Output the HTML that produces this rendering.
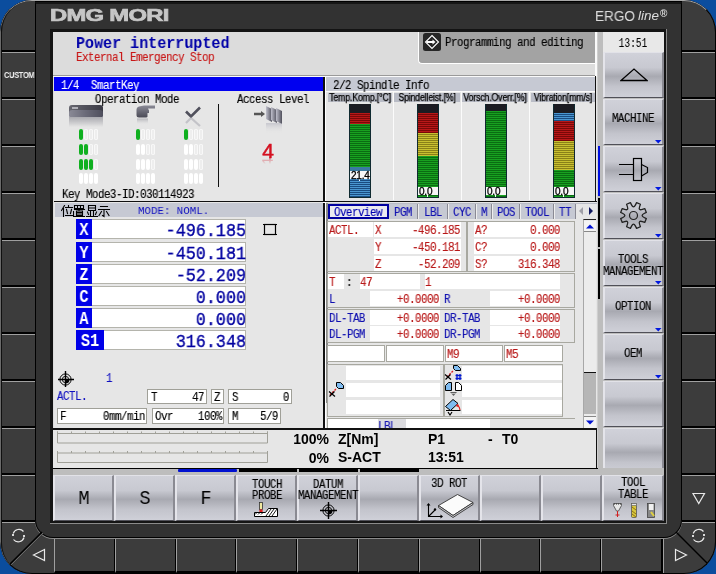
<!DOCTYPE html><html><head><meta charset="utf-8"><style>
*{margin:0;padding:0;box-sizing:border-box}
html,body{width:716px;height:574px;overflow:hidden;background:#0b4d9e}
body{font-family:"Liberation Sans",sans-serif;position:relative}
.a{position:absolute}
.mono{font-family:"Liberation Mono",monospace}
.fb{position:absolute;background:#3c3c3c;border-top:1px solid #a0a0a0;border-bottom:2px solid #000}
.bez{background:#323232}
.sk{position:absolute;background:linear-gradient(#d0d1d9 0%,#c8c9d1 33%,#a8a9b1 53%,#c3c4cc 76%,#cfd0d8 100%);border-left:2px solid #e4e4ea;border-right:2px solid #8a8a92;border-top:1px solid #e2e2e8;border-bottom:1px solid #505058}
</style></head><body>
<div class="a" style="left:0;top:0;width:716px;height:574px;clip-path:inset(0 round 32px);background:#000">
<div class="fb" style="left:2px;top:0px;width:33px;height:52px;border-top:none;"></div>
<div class="fb" style="left:682px;top:0px;width:33px;height:52px;border-top:none;"></div>
<div class="fb" style="left:2px;top:52px;width:33px;height:47px;"></div>
<div class="fb" style="left:682px;top:52px;width:33px;height:47px;"></div>
<div class="fb" style="left:2px;top:99px;width:33px;height:47px;"></div>
<div class="fb" style="left:682px;top:99px;width:33px;height:47px;"></div>
<div class="fb" style="left:2px;top:146px;width:33px;height:47px;"></div>
<div class="fb" style="left:682px;top:146px;width:33px;height:47px;"></div>
<div class="fb" style="left:2px;top:193px;width:33px;height:47px;"></div>
<div class="fb" style="left:682px;top:193px;width:33px;height:47px;"></div>
<div class="fb" style="left:2px;top:240px;width:33px;height:47px;"></div>
<div class="fb" style="left:682px;top:240px;width:33px;height:47px;"></div>
<div class="fb" style="left:2px;top:287px;width:33px;height:47px;"></div>
<div class="fb" style="left:682px;top:287px;width:33px;height:47px;"></div>
<div class="fb" style="left:2px;top:334px;width:33px;height:47px;"></div>
<div class="fb" style="left:682px;top:334px;width:33px;height:47px;"></div>
<div class="fb" style="left:2px;top:381px;width:33px;height:47px;"></div>
<div class="fb" style="left:682px;top:381px;width:33px;height:47px;"></div>
<div class="fb" style="left:2px;top:428px;width:33px;height:47px;"></div>
<div class="fb" style="left:682px;top:428px;width:33px;height:47px;"></div>
<div class="fb" style="left:2px;top:475px;width:33px;height:47px;"></div>
<div class="fb" style="left:682px;top:475px;width:33px;height:47px;"></div>
<div class="a" style="left:2px;top:522px;width:52px;height:52px;background:#3c3c3c;border-top:1px solid #a0a0a0"></div>
<div class="a" style="left:663px;top:522px;width:52px;height:52px;background:#3c3c3c;border-top:1px solid #a0a0a0;border-left:1px solid #a0a0a0"></div>
<div class="fb" style="left:54px;top:538px;width:61px;height:35px;border-left:1px solid #a0a0a0;border-right:1px solid #000"></div>
<div class="fb" style="left:115px;top:538px;width:61px;height:35px;border-left:1px solid #a0a0a0;border-right:1px solid #000"></div>
<div class="fb" style="left:176px;top:538px;width:60px;height:35px;border-left:1px solid #a0a0a0;border-right:1px solid #000"></div>
<div class="fb" style="left:236px;top:538px;width:61px;height:35px;border-left:1px solid #a0a0a0;border-right:1px solid #000"></div>
<div class="fb" style="left:297px;top:538px;width:61px;height:35px;border-left:1px solid #a0a0a0;border-right:1px solid #000"></div>
<div class="fb" style="left:358px;top:538px;width:61px;height:35px;border-left:1px solid #a0a0a0;border-right:1px solid #000"></div>
<div class="fb" style="left:419px;top:538px;width:61px;height:35px;border-left:1px solid #a0a0a0;border-right:1px solid #000"></div>
<div class="fb" style="left:480px;top:538px;width:60px;height:35px;border-left:1px solid #a0a0a0;border-right:1px solid #000"></div>
<div class="fb" style="left:540px;top:538px;width:61px;height:35px;border-left:1px solid #a0a0a0;border-right:1px solid #000"></div>
<div class="fb" style="left:601px;top:538px;width:61px;height:35px;border-left:1px solid #a0a0a0;border-right:1px solid #000"></div>
<div class="a bez" style="left:35px;top:2px;width:647px;height:536px;border-radius:0 0 18px 18px;border:1px solid #000;border-top:2px solid #161616;box-shadow:0 1px 0 #8a8a8a"></div>
<svg class="a" style="left:0;top:0" width="716" height="574">
<line x1="10" y1="564" x2="42" y2="532" stroke="#000" stroke-width="1.5"/><line x1="11" y1="565" x2="43" y2="533" stroke="#6a6a6a" stroke-width="1"/>
<line x1="676" y1="532" x2="707" y2="563" stroke="#000" stroke-width="1.5"/>
<path d="M13.2 533.5A6 6 0 0 1 23.5 531.5M24 537.5A6 6 0 0 1 13.5 539.5" fill="none" stroke="#e8e8e8" stroke-width="1.2"/><circle cx="13" cy="535" r="1.1" fill="#fff"/><circle cx="24" cy="536" r="1.1" fill="#fff"/>
<path d="M693.2 533.5A6 6 0 0 1 703.5 531.5M704 537.5A6 6 0 0 1 693.5 539.5" fill="none" stroke="#e8e8e8" stroke-width="1.2"/><circle cx="693" cy="536" r="1.1" fill="#fff"/><circle cx="704" cy="535" r="1.1" fill="#fff"/>
<path d="M44.5 549.5 L33.5 555 L44.5 560.5 Z" fill="none" stroke="#e8e8e8" stroke-width="1.2"/>
<path d="M675.5 549.5 L686.5 555 L675.5 560.5 Z" fill="none" stroke="#e8e8e8" stroke-width="1.2"/>
<path d="M693 493.5 L704.5 493.5 L698.75 503.5 Z" fill="none" stroke="#e8e8e8" stroke-width="1.2"/>
</svg>
<div class="a" style="left:0;top:0;width:716px;height:574px;border-radius:32px;border:1px solid #6a6a6a;border-top-color:#a8a8a8;border-right-color:#000;border-bottom-color:#000"></div>
<div class="a" style="left:1px;top:1px;width:714px;height:573px;border-radius:31px;border:1px solid #101010;border-top:none;border-right:none;border-bottom:none"></div>
<div class="a" style="left:1px;top:71px;width:33px;font:bold 9px 'Liberation Sans';line-height:9px;color:#f0f0f0;text-align:center;transform:scaleX(0.82);letter-spacing:-0.3px;will-change:transform">CUSTOM</div>
</div>
<div class="a" style="left:50px;top:7px;font:bold 17px 'Liberation Sans';line-height:17px;color:#c6c6c6;transform:scaleX(1.4);transform-origin:left top;white-space:nowrap;-webkit-text-stroke:0.7px #c6c6c6;letter-spacing:-0.5px;will-change:transform">DMG MORI</div>
<div class="a" style="left:595px;top:9px;font:14px 'Liberation Sans';line-height:14px;color:#dcdcdc;white-space:nowrap;will-change:transform;transform:scaleX(0.97);transform-origin:0 0">ERGO</div>
<div class="a" style="left:638px;top:9px;font:italic 13.5px 'Liberation Sans';line-height:14px;color:#dcdcdc;white-space:nowrap;will-change:transform">line</div>
<div class="a" style="left:660px;top:9px;font:bold 10px 'Liberation Sans';line-height:10px;color:#dcdcdc;white-space:nowrap;will-change:transform">®</div>
<div class="a" style="left:50px;top:29px;width:617px;height:495px;background:#141414;border-right:1px solid #8a8a8a;border-bottom:1px solid #8a8a8a"></div>
<div class="a" style="left:53px;top:32px;width:545px;height:435px;background:#dcdcdc;border-left:1px solid #fff;border-top:1px solid #fff;border-radius:3px 0 0 0"></div>
<div class="a" style="left:597px;top:32px;width:67px;height:443px;background:#bdbdbd"></div>
<div class="a" style="left:596px;top:32px;width:2px;height:436px;background:#cfcfcf"></div>
<div class="a" style="left:598px;top:146px;width:2px;height:50px;background:#0010e0"></div>
<div class="a" style="left:598px;top:198px;width:2px;height:49px;background:#000"></div>
<div class="a" style="left:598px;top:249px;width:2px;height:50px;background:#000"></div>
<div class="a" style="left:603px;top:32px;width:61px;height:20px;background:#e8e8e8"></div>
<div class="a" style="left:433px;top:38px;width:400px;text-align:center;font:12px 'Liberation Mono';line-height:12px;color:#000;white-space:pre;will-change:transform;transform:scaleX(0.8);transform-origin:50% 0;">13:51</div>
<div class="sk" style="left:603px;top:52px;width:61px;height:46px"></div>
<div class="sk" style="left:603px;top:99px;width:61px;height:46px"></div>
<div class="sk" style="left:603px;top:146px;width:61px;height:46px"></div>
<div class="sk" style="left:603px;top:193px;width:61px;height:46px"></div>
<div class="sk" style="left:603px;top:240px;width:61px;height:46px"></div>
<div class="sk" style="left:603px;top:287px;width:61px;height:46px"></div>
<div class="sk" style="left:603px;top:334px;width:61px;height:46px"></div>
<div class="sk" style="left:603px;top:381px;width:61px;height:46px"></div>
<div class="sk" style="left:603px;top:428px;width:61px;height:46px"></div>
<svg class="a" style="left:655px;top:140px" width="7" height="4"><path d="M0 0H6.5L3.25 3.5Z" fill="#0018e0"/></svg>
<svg class="a" style="left:655px;top:187px" width="7" height="4"><path d="M0 0H6.5L3.25 3.5Z" fill="#0018e0"/></svg>
<svg class="a" style="left:655px;top:234px" width="7" height="4"><path d="M0 0H6.5L3.25 3.5Z" fill="#0018e0"/></svg>
<svg class="a" style="left:655px;top:281px" width="7" height="4"><path d="M0 0H6.5L3.25 3.5Z" fill="#0018e0"/></svg>
<svg class="a" style="left:655px;top:328px" width="7" height="4"><path d="M0 0H6.5L3.25 3.5Z" fill="#0018e0"/></svg>
<svg class="a" style="left:655px;top:375px" width="7" height="4"><path d="M0 0H6.5L3.25 3.5Z" fill="#0018e0"/></svg>
<svg class="a" style="left:620px;top:66px" width="28" height="16"><path d="M1 14.5H27L14 3Z" fill="none" stroke="#000" stroke-width="1.3"/></svg>
<div class="a" style="left:433px;top:113px;width:400px;text-align:center;font:12px 'Liberation Mono';line-height:12px;color:#000;white-space:pre;will-change:transform;transform:scaleX(0.9);transform-origin:50% 0;letter-spacing:-0.53px;-webkit-text-stroke:0.15px currentColor">MACHINE</div>
<div class="a" style="left:433px;top:254px;width:400px;text-align:center;font:12px 'Liberation Mono';line-height:12px;color:#000;white-space:pre;will-change:transform;transform:scaleX(0.9);transform-origin:50% 0;letter-spacing:-0.53px;-webkit-text-stroke:0.15px currentColor">TOOLS</div>
<div class="a" style="left:433px;top:266px;width:400px;text-align:center;font:12px 'Liberation Mono';line-height:12px;color:#000;white-space:pre;will-change:transform;transform:scaleX(0.9);transform-origin:50% 0;letter-spacing:-0.53px;-webkit-text-stroke:0.15px currentColor">MANAGEMENT</div>
<div class="a" style="left:433px;top:301px;width:400px;text-align:center;font:12px 'Liberation Mono';line-height:12px;color:#000;white-space:pre;will-change:transform;transform:scaleX(0.9);transform-origin:50% 0;letter-spacing:-0.53px;-webkit-text-stroke:0.15px currentColor">OPTION</div>
<div class="a" style="left:433px;top:348px;width:400px;text-align:center;font:12px 'Liberation Mono';line-height:12px;color:#000;white-space:pre;will-change:transform;transform:scaleX(0.9);transform-origin:50% 0;letter-spacing:-0.53px;-webkit-text-stroke:0.15px currentColor">OEM</div>
<svg class="a" style="left:615px;top:155px" width="40" height="30"><path d="M4 9.5H18.5M4 19.5H18.5" stroke="#000" stroke-width="1.2"/><rect x="18.5" y="3.5" width="8" height="22" fill="none" stroke="#000" stroke-width="1.2"/><path d="M26.5 9.5L32.5 12.5V17.5L26.5 21" fill="none" stroke="#000" stroke-width="1.2"/></svg>
<svg class="a" style="left:613px;top:195px" width="42" height="42"><path d="M22.47 9.88L23.58 7.66L27.40 9.25L26.62 11.60Q25.17 15.83 29.40 14.38L31.75 13.60L33.34 17.42L31.12 18.53Q27.10 20.50 31.12 22.47L33.34 23.58L31.75 27.40L29.40 26.62Q25.17 25.17 26.62 29.40L27.40 31.75L23.58 33.34L22.47 31.12Q20.50 27.10 18.53 31.12L17.42 33.34L13.60 31.75L14.38 29.40Q15.83 25.17 11.60 26.62L9.25 27.40L7.66 23.58L9.88 22.47Q13.90 20.50 9.88 18.53L7.66 17.42L9.25 13.60L11.60 14.38Q15.83 15.83 14.38 11.60L13.60 9.25L17.42 7.66L18.53 9.88Q20.50 13.90 22.47 9.88Z" fill="none" stroke="#222" stroke-width="1.3" stroke-linejoin="round"/><circle cx="20.5" cy="20.5" r="4" fill="none" stroke="#222" stroke-width="1.2"/></svg>
<div class="a" style="left:53px;top:468px;width:545px;height:1px;background:#000"></div>
<div class="a" style="left:598px;top:468px;width:66px;height:2px;background:#bdbdbd"></div>
<div class="a" style="left:53px;top:469px;width:611px;height:6px;background:#bdbdbd"></div>
<div class="a" style="left:178px;top:469px;width:59px;height:3px;background:#0010d0;border-radius:1px"></div>
<div class="a" style="left:239px;top:469px;width:58px;height:3px;background:#000"></div>
<div class="a" style="left:299px;top:469px;width:59px;height:3px;background:#000"></div>
<div class="a" style="left:360px;top:469px;width:59px;height:3px;background:#000"></div>
<div class="sk" style="left:53px;top:475px;width:61px;height:46px"></div>
<div class="sk" style="left:114px;top:475px;width:61px;height:46px"></div>
<div class="sk" style="left:175px;top:475px;width:61px;height:46px"></div>
<div class="sk" style="left:236px;top:475px;width:61px;height:46px"></div>
<div class="sk" style="left:297px;top:475px;width:61px;height:46px"></div>
<div class="sk" style="left:358px;top:475px;width:61px;height:46px"></div>
<div class="sk" style="left:419px;top:475px;width:61px;height:46px"></div>
<div class="sk" style="left:480px;top:475px;width:61px;height:46px"></div>
<div class="sk" style="left:541px;top:475px;width:61px;height:46px"></div>
<div class="sk" style="left:602px;top:475px;width:62px;height:46px"></div>
<div class="a" style="left:53px;top:521px;width:611px;height:2px;background:#141414"></div>
<div class="a" style="left:-116.5px;top:489px;width:400px;text-align:center;font:20px 'Liberation Mono';line-height:20px;color:#000;white-space:pre;will-change:transform;transform:scaleX(0.92);transform-origin:50% 0;">M</div>
<div class="a" style="left:-55.5px;top:489px;width:400px;text-align:center;font:20px 'Liberation Mono';line-height:20px;color:#000;white-space:pre;will-change:transform;transform:scaleX(0.92);transform-origin:50% 0;">S</div>
<div class="a" style="left:5.5px;top:489px;width:400px;text-align:center;font:20px 'Liberation Mono';line-height:20px;color:#000;white-space:pre;will-change:transform;transform:scaleX(0.92);transform-origin:50% 0;">F</div>
<div class="a" style="left:67px;top:479px;width:400px;text-align:center;font:12px 'Liberation Mono';line-height:12px;color:#000;white-space:pre;will-change:transform;transform:scaleX(0.9);transform-origin:50% 0;letter-spacing:-0.53px;-webkit-text-stroke:0.15px currentColor">TOUCH</div>
<div class="a" style="left:67px;top:490px;width:400px;text-align:center;font:12px 'Liberation Mono';line-height:12px;color:#000;white-space:pre;will-change:transform;transform:scaleX(0.9);transform-origin:50% 0;letter-spacing:-0.53px;-webkit-text-stroke:0.15px currentColor">PROBE</div>
<div class="a" style="left:128px;top:479px;width:400px;text-align:center;font:12px 'Liberation Mono';line-height:12px;color:#000;white-space:pre;will-change:transform;transform:scaleX(0.9);transform-origin:50% 0;letter-spacing:-0.53px;-webkit-text-stroke:0.15px currentColor">DATUM</div>
<div class="a" style="left:128px;top:490px;width:400px;text-align:center;font:12px 'Liberation Mono';line-height:12px;color:#000;white-space:pre;will-change:transform;transform:scaleX(0.9);transform-origin:50% 0;letter-spacing:-0.53px;-webkit-text-stroke:0.15px currentColor">MANAGEMENT</div>
<div class="a" style="left:249px;top:478px;width:400px;text-align:center;font:12px 'Liberation Mono';line-height:12px;color:#000;white-space:pre;will-change:transform;transform:scaleX(0.9);transform-origin:50% 0;letter-spacing:-0.53px;-webkit-text-stroke:0.15px currentColor">3D ROT</div>
<div class="a" style="left:433px;top:477px;width:400px;text-align:center;font:12px 'Liberation Mono';line-height:12px;color:#000;white-space:pre;will-change:transform;transform:scaleX(0.9);transform-origin:50% 0;letter-spacing:-0.53px;-webkit-text-stroke:0.15px currentColor">TOOL</div>
<div class="a" style="left:433px;top:489px;width:400px;text-align:center;font:12px 'Liberation Mono';line-height:12px;color:#000;white-space:pre;will-change:transform;transform:scaleX(0.9);transform-origin:50% 0;letter-spacing:-0.53px;-webkit-text-stroke:0.15px currentColor">TABLE</div>
<div class="a" style="left:53px;top:32px;width:544px;height:436px;background:#dcdcdc"></div>
<div class="a" style="left:418px;top:32px;width:179px;height:32px;background:#a3a3a3;border-left:1px solid #fff;border-bottom:1px solid #fff;border-radius:0 0 0 4px"></div>
<svg class="a" style="left:423px;top:33px" width="19" height="19"><rect x="0" y="0" width="18" height="18" rx="2.5" fill="#262626"/><path d="M9 2.5L15.5 9L9 15.5L2.5 9Z" fill="none" stroke="#fff" stroke-width="1.1"/><path d="M3.5 9H11" stroke="#fff" stroke-width="2"/><path d="M9.5 6.5L12.5 9L9.5 11.5Z" fill="#fff"/></svg>
<div class="a" style="left:445px;top:37px;font:12px 'Liberation Mono';line-height:12px;color:#000;white-space:pre;will-change:transform;transform:scaleX(0.9);transform-origin:0 0;letter-spacing:-0.53px;-webkit-text-stroke:0.15px currentColor">Programming and editing</div>
<div class="a" style="left:76px;top:36px;font:bold 16px 'Liberation Mono';line-height:16px;color:#0000a8;white-space:pre;will-change:transform;transform:scaleX(0.94);transform-origin:0 0;">Power interrupted</div>
<div class="a" style="left:76px;top:52px;font:12px 'Liberation Mono';line-height:12px;color:#c81818;white-space:pre;will-change:transform;transform:scaleX(0.9);transform-origin:0 0;letter-spacing:-0.53px;-webkit-text-stroke:0.15px currentColor">External Emergency Stop</div>
<div class="a" style="left:53px;top:75px;width:544px;height:1px;background:#9a9a9a"></div>
<div class="a" style="left:595px;top:32px;width:2px;height:44px;background:#fafafa"></div>
<div class="a" style="left:53px;top:76px;width:544px;height:1px;background:#fafafa"></div>
<div class="a" style="left:54px;top:77px;width:269px;height:124px;background:#e6e6e6"></div>
<div class="a" style="left:54px;top:77px;width:269px;height:14px;background:#0000f0"></div>
<div class="a" style="left:61px;top:80px;font:12px 'Liberation Mono';line-height:12px;color:#fff;white-space:pre;will-change:transform;transform:scaleX(0.9);transform-origin:0 0;letter-spacing:-0.53px;-webkit-text-stroke:0.15px currentColor">1/4  SmartKey</div>
<div class="a" style="left:-63px;top:94px;width:400px;text-align:center;font:12px 'Liberation Mono';line-height:12px;color:#000;white-space:pre;will-change:transform;transform:scaleX(0.9);transform-origin:50% 0;letter-spacing:-0.53px;-webkit-text-stroke:0.15px currentColor">Operation Mode</div>
<div class="a" style="left:73px;top:94px;width:400px;text-align:center;font:12px 'Liberation Mono';line-height:12px;color:#000;white-space:pre;will-change:transform;transform:scaleX(0.9);transform-origin:50% 0;letter-spacing:-0.53px;-webkit-text-stroke:0.15px currentColor">Access Level</div>
<div class="a" style="left:218px;top:104px;width:1px;height:83px;background:#111"></div>
<div class="a" style="left:62px;top:189px;font:12px 'Liberation Mono';line-height:12px;color:#000;white-space:pre;will-change:transform;transform:scaleX(0.9);transform-origin:0 0;letter-spacing:-0.53px;-webkit-text-stroke:0.15px currentColor">Key Mode3-ID:030114923</div>
<div class="a" style="left:69px;top:105px;width:34px;height:12px;border-radius:3px 3px 1px 1px;background:linear-gradient(90deg,#8a8a96,#6a6a78 50%,#4e4e5c);box-shadow:inset 0 5px 0 rgba(0,0,0,.25)"></div>
<div class="a" style="left:69px;top:117px;width:34px;height:10px;background:linear-gradient(rgba(120,120,130,.55),rgba(200,200,205,0))"></div>
<div class="a" style="left:72px;top:107px;width:6px;height:2px;background:#b0b0b8"></div>
<svg class="a" style="left:134px;top:104px" width="24" height="24"><defs><linearGradient id="hg" x1="0" y1="0" x2="0" y2="1"><stop offset="0" stop-color="#8a8a96"/><stop offset="1" stop-color="#4a4a56"/></linearGradient><linearGradient id="hr" x1="0" y1="0" x2="0" y2="1"><stop offset="0" stop-color="#8a8a94" stop-opacity=".55"/><stop offset="1" stop-color="#e6e6e6" stop-opacity="0"/></linearGradient></defs><path d="M2.5 6Q2.5 3 5 2.5L10 1.5H21V4.5H14L15 6.5V9H13.5V12.5Q13.5 13.5 12 13.5H5Q2.5 13.5 2.5 11Z" fill="url(#hg)"/><path d="M3 14.5H14V21H3Z" fill="url(#hr)"/></svg>
<svg class="a" style="left:184px;top:105px" width="18" height="24"><path d="M2 6.5L7 11.5L16 2.5" fill="none" stroke="#50505c" stroke-width="2.6"/><path d="M2 18L7 13L16 21" fill="none" stroke="#9a9aa4" stroke-width="2.2" opacity=".45"/></svg>
<div class="a" style="left:79px;top:129px;width:3.5px;height:11px;border-radius:2px;background:#10b020"></div>
<div class="a" style="left:84px;top:129px;width:3.5px;height:11px;border-radius:2px;background:#eeeeee;box-shadow:inset 0 0 0 0.8px #fafafa"></div>
<div class="a" style="left:89px;top:129px;width:3.5px;height:11px;border-radius:2px;background:#eeeeee;box-shadow:inset 0 0 0 0.8px #fafafa"></div>
<div class="a" style="left:94px;top:129px;width:3.5px;height:11px;border-radius:2px;background:#eeeeee;box-shadow:inset 0 0 0 0.8px #fafafa"></div>
<div class="a" style="left:79px;top:144px;width:3.5px;height:11px;border-radius:2px;background:#10b020"></div>
<div class="a" style="left:84px;top:144px;width:3.5px;height:11px;border-radius:2px;background:#10b020"></div>
<div class="a" style="left:89px;top:144px;width:3.5px;height:11px;border-radius:2px;background:#eeeeee;box-shadow:inset 0 0 0 0.8px #fafafa"></div>
<div class="a" style="left:94px;top:144px;width:3.5px;height:11px;border-radius:2px;background:#eeeeee;box-shadow:inset 0 0 0 0.8px #fafafa"></div>
<div class="a" style="left:79px;top:159px;width:3.5px;height:11px;border-radius:2px;background:#10b020"></div>
<div class="a" style="left:84px;top:159px;width:3.5px;height:11px;border-radius:2px;background:#10b020"></div>
<div class="a" style="left:89px;top:159px;width:3.5px;height:11px;border-radius:2px;background:#10b020"></div>
<div class="a" style="left:94px;top:159px;width:3.5px;height:11px;border-radius:2px;background:#eeeeee;box-shadow:inset 0 0 0 0.8px #fafafa"></div>
<div class="a" style="left:79px;top:173px;width:3.5px;height:11px;border-radius:2px;background:#fff"></div>
<div class="a" style="left:84px;top:173px;width:3.5px;height:11px;border-radius:2px;background:#fff"></div>
<div class="a" style="left:89px;top:173px;width:3.5px;height:11px;border-radius:2px;background:#fff"></div>
<div class="a" style="left:94px;top:173px;width:3.5px;height:11px;border-radius:2px;background:#fff"></div>
<div class="a" style="left:136px;top:129px;width:3.5px;height:11px;border-radius:2px;background:#10b020"></div>
<div class="a" style="left:141px;top:129px;width:3.5px;height:11px;border-radius:2px;background:#eeeeee;box-shadow:inset 0 0 0 0.8px #fafafa"></div>
<div class="a" style="left:146px;top:129px;width:3.5px;height:11px;border-radius:2px;background:#eeeeee;box-shadow:inset 0 0 0 0.8px #fafafa"></div>
<div class="a" style="left:151px;top:129px;width:3.5px;height:11px;border-radius:2px;background:#eeeeee;box-shadow:inset 0 0 0 0.8px #fafafa"></div>
<div class="a" style="left:136px;top:144px;width:3.5px;height:11px;border-radius:2px;background:#fff"></div>
<div class="a" style="left:141px;top:144px;width:3.5px;height:11px;border-radius:2px;background:#fff"></div>
<div class="a" style="left:146px;top:144px;width:3.5px;height:11px;border-radius:2px;background:#eeeeee;box-shadow:inset 0 0 0 0.8px #fafafa"></div>
<div class="a" style="left:151px;top:144px;width:3.5px;height:11px;border-radius:2px;background:#eeeeee;box-shadow:inset 0 0 0 0.8px #fafafa"></div>
<div class="a" style="left:136px;top:159px;width:3.5px;height:11px;border-radius:2px;background:#fff"></div>
<div class="a" style="left:141px;top:159px;width:3.5px;height:11px;border-radius:2px;background:#fff"></div>
<div class="a" style="left:146px;top:159px;width:3.5px;height:11px;border-radius:2px;background:#fff"></div>
<div class="a" style="left:151px;top:159px;width:3.5px;height:11px;border-radius:2px;background:#eeeeee;box-shadow:inset 0 0 0 0.8px #fafafa"></div>
<div class="a" style="left:136px;top:173px;width:3.5px;height:11px;border-radius:2px;background:#fff"></div>
<div class="a" style="left:141px;top:173px;width:3.5px;height:11px;border-radius:2px;background:#fff"></div>
<div class="a" style="left:146px;top:173px;width:3.5px;height:11px;border-radius:2px;background:#fff"></div>
<div class="a" style="left:151px;top:173px;width:3.5px;height:11px;border-radius:2px;background:#fff"></div>
<div class="a" style="left:184px;top:129px;width:3.5px;height:11px;border-radius:2px;background:#10b020"></div>
<div class="a" style="left:189px;top:129px;width:3.5px;height:11px;border-radius:2px;background:#eeeeee;box-shadow:inset 0 0 0 0.8px #fafafa"></div>
<div class="a" style="left:194px;top:129px;width:3.5px;height:11px;border-radius:2px;background:#eeeeee;box-shadow:inset 0 0 0 0.8px #fafafa"></div>
<div class="a" style="left:199px;top:129px;width:3.5px;height:11px;border-radius:2px;background:#eeeeee;box-shadow:inset 0 0 0 0.8px #fafafa"></div>
<div class="a" style="left:184px;top:144px;width:3.5px;height:11px;border-radius:2px;background:#fff"></div>
<div class="a" style="left:189px;top:144px;width:3.5px;height:11px;border-radius:2px;background:#fff"></div>
<div class="a" style="left:194px;top:144px;width:3.5px;height:11px;border-radius:2px;background:#eeeeee;box-shadow:inset 0 0 0 0.8px #fafafa"></div>
<div class="a" style="left:199px;top:144px;width:3.5px;height:11px;border-radius:2px;background:#eeeeee;box-shadow:inset 0 0 0 0.8px #fafafa"></div>
<div class="a" style="left:184px;top:159px;width:3.5px;height:11px;border-radius:2px;background:#fff"></div>
<div class="a" style="left:189px;top:159px;width:3.5px;height:11px;border-radius:2px;background:#fff"></div>
<div class="a" style="left:194px;top:159px;width:3.5px;height:11px;border-radius:2px;background:#fff"></div>
<div class="a" style="left:199px;top:159px;width:3.5px;height:11px;border-radius:2px;background:#eeeeee;box-shadow:inset 0 0 0 0.8px #fafafa"></div>
<div class="a" style="left:184px;top:173px;width:3.5px;height:11px;border-radius:2px;background:#fff"></div>
<div class="a" style="left:189px;top:173px;width:3.5px;height:11px;border-radius:2px;background:#fff"></div>
<div class="a" style="left:194px;top:173px;width:3.5px;height:11px;border-radius:2px;background:#fff"></div>
<div class="a" style="left:199px;top:173px;width:3.5px;height:11px;border-radius:2px;background:#fff"></div>
<svg class="a" style="left:252px;top:104px" width="34" height="30"><defs><linearGradient id="sg" x1="0" x2="1"><stop offset="0" stop-color="#c0c0cc"/><stop offset="1" stop-color="#50505c"/></linearGradient></defs><path d="M2 10H10" stroke="#555" stroke-width="2.5"/><path d="M9 7L13 10L9 13Z" fill="#555"/><path d="M14 2L20 5L20 18L14 15Z" fill="url(#sg)"/><path d="M19 3L25 6L25 19L19 16Z" fill="url(#sg)"/><path d="M24 4L30 7L30 20L24 17Z" fill="url(#sg)"/><defs><linearGradient id="rg2" x1="0" y1="0" x2="0" y2="1"><stop offset="0" stop-color="#a0a0b0" stop-opacity=".45"/><stop offset="1" stop-color="#e6e6e6" stop-opacity="0"/></linearGradient></defs><rect x="14" y="19" width="16" height="10" fill="url(#rg2)"/></svg>
<div class="a" style="left:67.5px;top:140px;width:400px;text-align:center;font:21px 'Liberation Sans';line-height:21px;color:#d41020;white-space:pre;will-change:transform;transform:scaleX(1.0);transform-origin:50% 0;-webkit-text-stroke:0.5px #d41020">4</div>
<div class="a" style="left:257px;top:154px;width:21px;height:21px;font:21px 'Liberation Sans';line-height:21px;color:#d41020;text-align:center;transform:scaleY(-1);opacity:.45;-webkit-mask-image:linear-gradient(to top,#000 0,#000 4px,transparent 10px);will-change:transform">4</div>
<div class="a" style="left:323px;top:77px;width:2px;height:351px;background:#111"></div>
<div class="a" style="left:325px;top:77px;width:1px;height:351px;background:#fff"></div>
<div class="a" style="left:54px;top:201px;width:543px;height:1px;background:#111"></div>
<div class="a" style="left:54px;top:202px;width:543px;height:1px;background:#fff"></div>
<div class="a" style="left:326px;top:77px;width:271px;height:124px;background:#e6e6e6"></div>
<div class="a" style="left:326px;top:77px;width:270px;height:14px;background:#c6c9d3"></div>
<div class="a" style="left:326px;top:91px;width:270px;height:1px;background:#fafafa"></div>
<div class="a" style="left:333px;top:80px;font:12px 'Liberation Mono';line-height:12px;color:#000;white-space:pre;will-change:transform;transform:scaleX(0.9);transform-origin:0 0;letter-spacing:-0.53px;-webkit-text-stroke:0.15px currentColor">2/2 Spindle Info</div>
<div class="a" style="left:328px;top:93px;width:64px;height:9px;background:#b9bcc6"></div>
<div class="a" style="left:159.5px;top:93px;width:400px;text-align:center;font:10px 'Liberation Sans';line-height:10px;color:#000;white-space:pre;will-change:transform;transform:scaleX(0.88);transform-origin:50% 0;letter-spacing:-0.2px;-webkit-text-stroke:0.25px #000">Temp.Komp.[°C]</div>
<div class="a" style="left:394px;top:93px;width:66px;height:9px;background:#b9bcc6"></div>
<div class="a" style="left:227.0px;top:93px;width:400px;text-align:center;font:10px 'Liberation Sans';line-height:10px;color:#000;white-space:pre;will-change:transform;transform:scaleX(0.88);transform-origin:50% 0;letter-spacing:-0.2px;-webkit-text-stroke:0.25px #000">Spindelleist.[%]</div>
<div class="a" style="left:462px;top:93px;width:66px;height:9px;background:#b9bcc6"></div>
<div class="a" style="left:295.0px;top:93px;width:400px;text-align:center;font:10px 'Liberation Sans';line-height:10px;color:#000;white-space:pre;will-change:transform;transform:scaleX(0.88);transform-origin:50% 0;letter-spacing:-0.2px;-webkit-text-stroke:0.25px #000">Vorsch.Overr.[%]</div>
<div class="a" style="left:531px;top:93px;width:64px;height:9px;background:#b9bcc6"></div>
<div class="a" style="left:363.0px;top:93px;width:400px;text-align:center;font:10px 'Liberation Sans';line-height:10px;color:#000;white-space:pre;will-change:transform;transform:scaleX(0.88);transform-origin:50% 0;letter-spacing:-0.2px;-webkit-text-stroke:0.25px #000">Vibration[mm/s]</div>
<div class="a" style="left:595px;top:76px;width:1px;height:125px;background:#111"></div>
<div class="a" style="left:393px;top:92px;width:1px;height:108px;background:#fbfbfb"></div>
<div class="a" style="left:461px;top:92px;width:1px;height:108px;background:#fbfbfb"></div>
<div class="a" style="left:529px;top:92px;width:1px;height:108px;background:#fbfbfb"></div>
<div class="a" style="left:349px;top:104px;width:22px;height:94px;background:#102a30"></div>
<div class="a" style="left:350px;top:104px;width:20px;height:9px;background:#1c1c22"></div>
<div class="a" style="left:350px;top:113px;width:20px;height:11px;background:repeating-linear-gradient(#b81818 0 1.3px,#780808 1.3px 2px)"></div><div class="a" style="left:350px;top:124px;width:20px;height:43px;background:repeating-linear-gradient(#18a020 0 1.3px,#0a6c12 1.3px 2px)"></div><div class="a" style="left:350px;top:167px;width:20px;height:4px;background:repeating-linear-gradient(#3a7aa0 0 1.3px,#3a7aa0 1.3px 2px)"></div><div class="a" style="left:350px;top:179px;width:20px;height:18px;background:repeating-linear-gradient(#4a96d0 0 1.3px,#1a4c80 1.3px 2px)"></div>
<div class="a" style="left:350px;top:171px;width:20px;height:8px;background:#f6f6f6"></div>
<div class="a" style="left:359px;top:179px;width:1px;height:2px;background:#f6f6f6"></div>
<div class="a" style="left:351px;top:171px;font:10px 'Liberation Sans';line-height:10px;color:#000;white-space:pre;will-change:transform;transform:scaleX(1.0);transform-origin:0 0;letter-spacing:-0.2px;line-height:9px;-webkit-text-stroke:0.3px #000">21.4</div>
<div class="a" style="left:417px;top:104px;width:22px;height:94px;background:#102a30"></div>
<div class="a" style="left:418px;top:104px;width:20px;height:9px;background:#1c1c22"></div>
<div class="a" style="left:418px;top:113px;width:20px;height:20px;background:repeating-linear-gradient(#b81818 0 1.3px,#780808 1.3px 2px)"></div><div class="a" style="left:418px;top:133px;width:20px;height:23px;background:repeating-linear-gradient(#c8c030 0 1.3px,#8a8018 1.3px 2px)"></div><div class="a" style="left:418px;top:156px;width:20px;height:41px;background:repeating-linear-gradient(#18a020 0 1.3px,#0a6c12 1.3px 2px)"></div>
<div class="a" style="left:418px;top:187px;width:20px;height:8px;background:#f6f6f6"></div>
<div class="a" style="left:427px;top:195px;width:1px;height:2px;background:#f6f6f6"></div>
<div class="a" style="left:419px;top:187px;font:10px 'Liberation Sans';line-height:10px;color:#000;white-space:pre;will-change:transform;transform:scaleX(1.0);transform-origin:0 0;letter-spacing:-0.2px;line-height:9px;-webkit-text-stroke:0.3px #000">0.0</div>
<div class="a" style="left:485px;top:104px;width:22px;height:94px;background:#102a30"></div>
<div class="a" style="left:486px;top:104px;width:20px;height:9px;background:#1c1c22"></div>
<div class="a" style="left:486px;top:111px;width:20px;height:86px;background:repeating-linear-gradient(#18a020 0 1.3px,#0a6c12 1.3px 2px)"></div>
<div class="a" style="left:486px;top:187px;width:20px;height:8px;background:#f6f6f6"></div>
<div class="a" style="left:495px;top:195px;width:1px;height:2px;background:#f6f6f6"></div>
<div class="a" style="left:487px;top:187px;font:10px 'Liberation Sans';line-height:10px;color:#000;white-space:pre;will-change:transform;transform:scaleX(1.0);transform-origin:0 0;letter-spacing:-0.2px;line-height:9px;-webkit-text-stroke:0.3px #000">0.0</div>
<div class="a" style="left:553px;top:104px;width:22px;height:94px;background:#102a30"></div>
<div class="a" style="left:554px;top:104px;width:20px;height:9px;background:#1c1c22"></div>
<div class="a" style="left:554px;top:113px;width:20px;height:8px;background:repeating-linear-gradient(#4a96d0 0 1.3px,#1a4c80 1.3px 2px)"></div><div class="a" style="left:554px;top:121px;width:20px;height:20px;background:repeating-linear-gradient(#b81818 0 1.3px,#780808 1.3px 2px)"></div><div class="a" style="left:554px;top:141px;width:20px;height:29px;background:repeating-linear-gradient(#c8c030 0 1.3px,#8a8018 1.3px 2px)"></div><div class="a" style="left:554px;top:170px;width:20px;height:27px;background:repeating-linear-gradient(#18a020 0 1.3px,#0a6c12 1.3px 2px)"></div>
<div class="a" style="left:554px;top:187px;width:20px;height:8px;background:#f6f6f6"></div>
<div class="a" style="left:563px;top:195px;width:1px;height:2px;background:#f6f6f6"></div>
<div class="a" style="left:555px;top:187px;font:10px 'Liberation Sans';line-height:10px;color:#000;white-space:pre;will-change:transform;transform:scaleX(1.0);transform-origin:0 0;letter-spacing:-0.2px;line-height:9px;-webkit-text-stroke:0.3px #000">0.0</div>
<div class="a" style="left:54px;top:202px;width:269px;height:226px;background:#e6e6e6"></div>
<div class="a" style="left:55px;top:203px;width:268px;height:14px;background:#c6c9d3"></div>
<svg class="a" style="left:60.5px;top:204.5px" width="13" height="13"><path d="M3.5 0.5L0.5 5.5M2.5 3.5V11.5M7.5 0.5V1.5M4.5 2.5H11.5M5.5 4.5L6.5 8.5M10.5 4.5L9.5 8.5M4.5 10.5H11.5" fill="none" stroke="#000" stroke-width="1.1" stroke-linecap="square"/></svg>
<svg class="a" style="left:72.5px;top:204.5px" width="13" height="13"><path d="M1.5 0.5H10.5V3.5H1.5ZM4.5 0.5V3.5M7.5 0.5V3.5M1.5 4.5H11.5M6 3.5V5.5M3.5 6H9.5V10.5H3.5ZM3.5 7.5H9.5M3.5 9H9.5M0.5 6.5V11.5H11.5" fill="none" stroke="#000" stroke-width="1.1" stroke-linecap="square"/></svg>
<svg class="a" style="left:85.5px;top:204.5px" width="13" height="13"><path d="M2.5 0.5H9.5V5.5H2.5ZM2.5 3H9.5M4.5 6.5V10.5M7.5 6.5V10.5M1.5 7L2.5 9.5M10.5 7L9.5 9.5M0.5 11.5H11.5" fill="none" stroke="#000" stroke-width="1.1" stroke-linecap="square"/></svg>
<svg class="a" style="left:97.5px;top:204.5px" width="13" height="13"><path d="M2.5 1.5H9.5M0.5 4.5H11.5M6 4.5V11.5L4.5 10.5M3.5 6.5L1 10.5M8.5 6.5L11 10.5" fill="none" stroke="#000" stroke-width="1.1" stroke-linecap="square"/></svg>
<div class="a" style="left:138px;top:206px;font:11px 'Liberation Mono';line-height:11px;color:#1010c0;white-space:pre;will-change:transform;transform:scaleX(0.98);transform-origin:0 0;">MODE: NOML.</div>
<div class="a" style="left:76px;top:219px;width:170px;height:20px;background:#fff;border:1px solid #b4b4ac"></div>
<div class="a" style="left:76px;top:219px;width:16px;height:20px;background:#0000e8"></div>
<div class="a" style="left:-116.0px;top:221px;width:400px;text-align:center;font:bold 18px 'Liberation Mono';line-height:18px;color:#fff;white-space:pre;will-change:transform;transform:scaleX(0.85);transform-origin:50% 0;">X</div>
<div class="a" style="left:-154.5px;top:222px;width:400px;text-align:right;font:18px 'Liberation Mono';line-height:18px;color:#0000a0;white-space:pre;will-change:transform;transform:scaleX(0.93);transform-origin:100% 0;-webkit-text-stroke:0.35px #0000a0">-496.185</div>
<div class="a" style="left:76px;top:242px;width:170px;height:20px;background:#fff;border:1px solid #b4b4ac"></div>
<div class="a" style="left:76px;top:242px;width:16px;height:20px;background:#0000e8"></div>
<div class="a" style="left:-116.0px;top:244px;width:400px;text-align:center;font:bold 18px 'Liberation Mono';line-height:18px;color:#fff;white-space:pre;will-change:transform;transform:scaleX(0.85);transform-origin:50% 0;">Y</div>
<div class="a" style="left:-154.5px;top:245px;width:400px;text-align:right;font:18px 'Liberation Mono';line-height:18px;color:#0000a0;white-space:pre;will-change:transform;transform:scaleX(0.93);transform-origin:100% 0;-webkit-text-stroke:0.35px #0000a0">-450.181</div>
<div class="a" style="left:76px;top:264px;width:170px;height:20px;background:#fff;border:1px solid #b4b4ac"></div>
<div class="a" style="left:76px;top:264px;width:16px;height:20px;background:#0000e8"></div>
<div class="a" style="left:-116.0px;top:266px;width:400px;text-align:center;font:bold 18px 'Liberation Mono';line-height:18px;color:#fff;white-space:pre;will-change:transform;transform:scaleX(0.85);transform-origin:50% 0;">Z</div>
<div class="a" style="left:-154.5px;top:267px;width:400px;text-align:right;font:18px 'Liberation Mono';line-height:18px;color:#0000a0;white-space:pre;will-change:transform;transform:scaleX(0.93);transform-origin:100% 0;-webkit-text-stroke:0.35px #0000a0">-52.209</div>
<div class="a" style="left:76px;top:286px;width:170px;height:20px;background:#fff;border:1px solid #b4b4ac"></div>
<div class="a" style="left:76px;top:286px;width:16px;height:20px;background:#0000e8"></div>
<div class="a" style="left:-116.0px;top:288px;width:400px;text-align:center;font:bold 18px 'Liberation Mono';line-height:18px;color:#fff;white-space:pre;will-change:transform;transform:scaleX(0.85);transform-origin:50% 0;">C</div>
<div class="a" style="left:-154.5px;top:289px;width:400px;text-align:right;font:18px 'Liberation Mono';line-height:18px;color:#0000a0;white-space:pre;will-change:transform;transform:scaleX(0.93);transform-origin:100% 0;-webkit-text-stroke:0.35px #0000a0">0.000</div>
<div class="a" style="left:76px;top:308px;width:170px;height:20px;background:#fff;border:1px solid #b4b4ac"></div>
<div class="a" style="left:76px;top:308px;width:16px;height:20px;background:#0000e8"></div>
<div class="a" style="left:-116.0px;top:310px;width:400px;text-align:center;font:bold 18px 'Liberation Mono';line-height:18px;color:#fff;white-space:pre;will-change:transform;transform:scaleX(0.85);transform-origin:50% 0;">A</div>
<div class="a" style="left:-154.5px;top:311px;width:400px;text-align:right;font:18px 'Liberation Mono';line-height:18px;color:#0000a0;white-space:pre;will-change:transform;transform:scaleX(0.93);transform-origin:100% 0;-webkit-text-stroke:0.35px #0000a0">0.000</div>
<div class="a" style="left:76px;top:330px;width:170px;height:20px;background:#fff;border:1px solid #b4b4ac"></div>
<div class="a" style="left:76px;top:330px;width:28px;height:20px;background:#0000e8"></div>
<div class="a" style="left:-110.0px;top:332px;width:400px;text-align:center;font:bold 18px 'Liberation Mono';line-height:18px;color:#fff;white-space:pre;will-change:transform;transform:scaleX(0.85);transform-origin:50% 0;">S1</div>
<div class="a" style="left:-154.5px;top:333px;width:400px;text-align:right;font:18px 'Liberation Mono';line-height:18px;color:#0000a0;white-space:pre;will-change:transform;transform:scaleX(0.93);transform-origin:100% 0;-webkit-text-stroke:0.35px #0000a0">316.348</div>
<svg class="a" style="left:262px;top:222px" width="16" height="15"><rect x="2.5" y="2.5" width="11" height="10" fill="none" stroke="#000" stroke-width="1.2"/><path d="M1 2.5H4M12 2.5H15M1 12.5H4M12 12.5H15" stroke="#000" stroke-width="1"/></svg>
<svg class="a" style="left:56px;top:370px" width="20" height="20"><circle cx="9.5" cy="9.5" r="5.6" fill="none" stroke="#000" stroke-width="1"/><circle cx="9.5" cy="9.5" r="3.2" fill="none" stroke="#000" stroke-width="0.9"/><path d="M9.5 9.5H13.5A4 4 0 0 1 9.5 13.5Z" fill="#000"/><path d="M9.5 1V17M2 9.5H18" stroke="#000" stroke-width="1.4"/></svg>
<div class="a" style="left:106px;top:373px;font:12px 'Liberation Mono';line-height:12px;color:#1010c0;white-space:pre;will-change:transform;transform:scaleX(0.9);transform-origin:0 0;letter-spacing:-0.53px;-webkit-text-stroke:0.15px currentColor">1</div>
<div class="a" style="left:57px;top:391px;font:12px 'Liberation Mono';line-height:12px;color:#1010c0;white-space:pre;will-change:transform;transform:scaleX(0.9);transform-origin:0 0;letter-spacing:-0.53px;-webkit-text-stroke:0.15px currentColor">ACTL.</div>
<div class="a" style="left:147px;top:389px;width:60px;height:15px;background:#fff;border:1px solid #a0a098"></div>
<div class="a" style="left:151px;top:392px;font:12px 'Liberation Mono';line-height:12px;color:#000;white-space:pre;will-change:transform;transform:scaleX(0.9);transform-origin:0 0;letter-spacing:-0.53px;-webkit-text-stroke:0.15px currentColor">T</div>
<div class="a" style="left:-196px;top:392px;width:400px;text-align:right;font:12px 'Liberation Mono';line-height:12px;color:#000;white-space:pre;will-change:transform;transform:scaleX(0.9);transform-origin:100% 0;letter-spacing:-0.53px;-webkit-text-stroke:0.15px currentColor">47</div>
<div class="a" style="left:211px;top:389px;width:13px;height:15px;background:#fff;border:1px solid #a0a098"></div>
<div class="a" style="left:214px;top:392px;font:12px 'Liberation Mono';line-height:12px;color:#000;white-space:pre;will-change:transform;transform:scaleX(0.9);transform-origin:0 0;letter-spacing:-0.53px;-webkit-text-stroke:0.15px currentColor">Z</div>
<div class="a" style="left:228px;top:389px;width:64px;height:15px;background:#fff;border:1px solid #a0a098"></div>
<div class="a" style="left:232px;top:392px;font:12px 'Liberation Mono';line-height:12px;color:#000;white-space:pre;will-change:transform;transform:scaleX(0.9);transform-origin:0 0;letter-spacing:-0.53px;-webkit-text-stroke:0.15px currentColor">S</div>
<div class="a" style="left:-111px;top:392px;width:400px;text-align:right;font:12px 'Liberation Mono';line-height:12px;color:#000;white-space:pre;will-change:transform;transform:scaleX(0.9);transform-origin:100% 0;letter-spacing:-0.53px;-webkit-text-stroke:0.15px currentColor">0</div>
<div class="a" style="left:57px;top:408px;width:90px;height:16px;background:#fff;border:1px solid #a0a098"></div>
<div class="a" style="left:60px;top:411px;font:12px 'Liberation Mono';line-height:12px;color:#000;white-space:pre;will-change:transform;transform:scaleX(0.9);transform-origin:0 0;letter-spacing:-0.53px;-webkit-text-stroke:0.15px currentColor">F</div>
<div class="a" style="left:-255px;top:411px;width:400px;text-align:right;font:12px 'Liberation Mono';line-height:12px;color:#000;white-space:pre;will-change:transform;transform:scaleX(0.9);transform-origin:100% 0;letter-spacing:-0.53px;-webkit-text-stroke:0.15px currentColor">0mm/min</div>
<div class="a" style="left:152px;top:408px;width:72px;height:16px;background:#fff;border:1px solid #a0a098"></div>
<div class="a" style="left:155px;top:411px;font:12px 'Liberation Mono';line-height:12px;color:#000;white-space:pre;will-change:transform;transform:scaleX(0.9);transform-origin:0 0;letter-spacing:-0.53px;-webkit-text-stroke:0.15px currentColor">Ovr</div>
<div class="a" style="left:-178px;top:411px;width:400px;text-align:right;font:12px 'Liberation Mono';line-height:12px;color:#000;white-space:pre;will-change:transform;transform:scaleX(0.9);transform-origin:100% 0;letter-spacing:-0.53px;-webkit-text-stroke:0.15px currentColor">100%</div>
<div class="a" style="left:228px;top:408px;width:53px;height:16px;background:#fff;border:1px solid #a0a098"></div>
<div class="a" style="left:232px;top:411px;font:12px 'Liberation Mono';line-height:12px;color:#000;white-space:pre;will-change:transform;transform:scaleX(0.9);transform-origin:0 0;letter-spacing:-0.53px;-webkit-text-stroke:0.15px currentColor">M</div>
<div class="a" style="left:-122px;top:411px;width:400px;text-align:right;font:12px 'Liberation Mono';line-height:12px;color:#000;white-space:pre;will-change:transform;transform:scaleX(0.9);transform-origin:100% 0;letter-spacing:-0.53px;-webkit-text-stroke:0.15px currentColor">5/9</div>
<div class="a" style="left:326px;top:202px;width:271px;height:226px;background:#e6e6e6"></div>
<div class="a" style="left:326px;top:203px;width:271px;height:16px;background:#b9bcc6"></div>
<div class="a" style="left:326px;top:203px;width:2px;height:200px;background:#8a8a8a"></div>
<div class="a" style="left:388px;top:204px;width:30px;height:15px;background:#c6c9d3;border-left:1px solid #eeeeee;border-right:1px solid #8a8a94"></div>
<div class="a" style="left:203.0px;top:207px;width:400px;text-align:center;font:12px 'Liberation Mono';line-height:12px;color:#1010b0;white-space:pre;will-change:transform;transform:scaleX(0.9);transform-origin:50% 0;letter-spacing:-0.53px;-webkit-text-stroke:0.15px currentColor">PGM</div>
<div class="a" style="left:418px;top:204px;width:30px;height:15px;background:#c6c9d3;border-left:1px solid #eeeeee;border-right:1px solid #8a8a94"></div>
<div class="a" style="left:233.0px;top:207px;width:400px;text-align:center;font:12px 'Liberation Mono';line-height:12px;color:#1010b0;white-space:pre;will-change:transform;transform:scaleX(0.9);transform-origin:50% 0;letter-spacing:-0.53px;-webkit-text-stroke:0.15px currentColor">LBL</div>
<div class="a" style="left:448px;top:204px;width:28px;height:15px;background:#c6c9d3;border-left:1px solid #eeeeee;border-right:1px solid #8a8a94"></div>
<div class="a" style="left:262.0px;top:207px;width:400px;text-align:center;font:12px 'Liberation Mono';line-height:12px;color:#1010b0;white-space:pre;will-change:transform;transform:scaleX(0.9);transform-origin:50% 0;letter-spacing:-0.53px;-webkit-text-stroke:0.15px currentColor">CYC</div>
<div class="a" style="left:476px;top:204px;width:16px;height:15px;background:#c6c9d3;border-left:1px solid #eeeeee;border-right:1px solid #8a8a94"></div>
<div class="a" style="left:284.0px;top:207px;width:400px;text-align:center;font:12px 'Liberation Mono';line-height:12px;color:#1010b0;white-space:pre;will-change:transform;transform:scaleX(0.9);transform-origin:50% 0;letter-spacing:-0.53px;-webkit-text-stroke:0.15px currentColor">M</div>
<div class="a" style="left:492px;top:204px;width:28px;height:15px;background:#c6c9d3;border-left:1px solid #eeeeee;border-right:1px solid #8a8a94"></div>
<div class="a" style="left:306.0px;top:207px;width:400px;text-align:center;font:12px 'Liberation Mono';line-height:12px;color:#1010b0;white-space:pre;will-change:transform;transform:scaleX(0.9);transform-origin:50% 0;letter-spacing:-0.53px;-webkit-text-stroke:0.15px currentColor">POS</div>
<div class="a" style="left:520px;top:204px;width:34px;height:15px;background:#c6c9d3;border-left:1px solid #eeeeee;border-right:1px solid #8a8a94"></div>
<div class="a" style="left:337.0px;top:207px;width:400px;text-align:center;font:12px 'Liberation Mono';line-height:12px;color:#1010b0;white-space:pre;will-change:transform;transform:scaleX(0.9);transform-origin:50% 0;letter-spacing:-0.53px;-webkit-text-stroke:0.15px currentColor">TOOL</div>
<div class="a" style="left:554px;top:204px;width:22px;height:15px;background:#c6c9d3;border-left:1px solid #eeeeee;border-right:1px solid #8a8a94"></div>
<div class="a" style="left:365.0px;top:207px;width:400px;text-align:center;font:12px 'Liberation Mono';line-height:12px;color:#1010b0;white-space:pre;will-change:transform;transform:scaleX(0.9);transform-origin:50% 0;letter-spacing:-0.53px;-webkit-text-stroke:0.15px currentColor">TT</div>
<div class="a" style="left:576px;top:204px;width:21px;height:15px;background:#e6e6e6"></div>
<svg class="a" style="left:578px;top:206px" width="18" height="10"><path d="M5 1V9L1 5Z" fill="#a0a0a8"/><path d="M11 1V9L15 5Z" fill="#101860"/></svg>
<div class="a" style="left:328px;top:204px;width:61px;height:15px;background:#eaeaf0;border:2px solid #0000a0"></div>
<div class="a" style="left:334px;top:207px;font:12px 'Liberation Mono';line-height:12px;color:#0000b0;white-space:pre;will-change:transform;transform:scaleX(0.9);transform-origin:0 0;letter-spacing:-0.53px;-webkit-text-stroke:0.15px currentColor">Overview</div>
<div class="a" style="left:583px;top:219px;width:13px;height:209px;background:#ececec;border-left:1px solid #a8a8a8;border-top:1px solid #222"></div>
<div class="a" style="left:584px;top:221px;width:12px;height:11px;background:#f4f4f4;border-bottom:1px solid #888"></div>
<svg class="a" style="left:585px;top:223px" width="10" height="7"><path d="M1 5.5H9L5 1.5Z" fill="#0010d0"/></svg>
<div class="a" style="left:584px;top:372px;width:12px;height:42px;background:#b6b6b6;border-top:1px solid #111"></div>
<div class="a" style="left:584px;top:416px;width:12px;height:12px;background:#f4f4f4;border-top:1px solid #888"></div>
<svg class="a" style="left:585px;top:419px" width="10" height="7"><path d="M1 1.5H9L5 5.5Z" fill="#0010d0"/></svg>
<div class="a" style="left:327px;top:221px;width:248px;height:51px;background:#e6e6e6;border:1px solid #a8a8a0"></div>
<div class="a" style="left:466px;top:222px;width:2px;height:49px;background:#a8a8a0"></div>
<div class="a" style="left:328px;top:222px;width:45px;height:15px;background:#fff"></div>
<div class="a" style="left:374px;top:222px;width:87px;height:15px;background:#fff"></div>
<div class="a" style="left:375px;top:225px;font:12px 'Liberation Mono';line-height:12px;color:#b81818;white-space:pre;will-change:transform;transform:scaleX(0.9);transform-origin:0 0;letter-spacing:-0.53px;-webkit-text-stroke:0.15px currentColor">X</div>
<div class="a" style="left:59.5px;top:225px;width:400px;text-align:right;font:12px 'Liberation Mono';line-height:12px;color:#b81818;white-space:pre;will-change:transform;transform:scaleX(0.9);transform-origin:100% 0;letter-spacing:-0.53px;-webkit-text-stroke:0.15px currentColor">-496.185</div>
<div class="a" style="left:374px;top:239px;width:87px;height:15px;background:#fff"></div>
<div class="a" style="left:375px;top:242px;font:12px 'Liberation Mono';line-height:12px;color:#b81818;white-space:pre;will-change:transform;transform:scaleX(0.9);transform-origin:0 0;letter-spacing:-0.53px;-webkit-text-stroke:0.15px currentColor">Y</div>
<div class="a" style="left:59.5px;top:242px;width:400px;text-align:right;font:12px 'Liberation Mono';line-height:12px;color:#b81818;white-space:pre;will-change:transform;transform:scaleX(0.9);transform-origin:100% 0;letter-spacing:-0.53px;-webkit-text-stroke:0.15px currentColor">-450.181</div>
<div class="a" style="left:374px;top:256px;width:87px;height:15px;background:#fff"></div>
<div class="a" style="left:375px;top:259px;font:12px 'Liberation Mono';line-height:12px;color:#b81818;white-space:pre;will-change:transform;transform:scaleX(0.9);transform-origin:0 0;letter-spacing:-0.53px;-webkit-text-stroke:0.15px currentColor">Z</div>
<div class="a" style="left:59.5px;top:259px;width:400px;text-align:right;font:12px 'Liberation Mono';line-height:12px;color:#b81818;white-space:pre;will-change:transform;transform:scaleX(0.9);transform-origin:100% 0;letter-spacing:-0.53px;-webkit-text-stroke:0.15px currentColor">-52.209</div>
<div class="a" style="left:474px;top:222px;width:86px;height:15px;background:#fff"></div>
<div class="a" style="left:475px;top:225px;font:12px 'Liberation Mono';line-height:12px;color:#b81818;white-space:pre;will-change:transform;transform:scaleX(0.9);transform-origin:0 0;letter-spacing:-0.53px;-webkit-text-stroke:0.15px currentColor">A?</div>
<div class="a" style="left:159.5px;top:225px;width:400px;text-align:right;font:12px 'Liberation Mono';line-height:12px;color:#b81818;white-space:pre;will-change:transform;transform:scaleX(0.9);transform-origin:100% 0;letter-spacing:-0.53px;-webkit-text-stroke:0.15px currentColor">0.000</div>
<div class="a" style="left:474px;top:239px;width:86px;height:15px;background:#fff"></div>
<div class="a" style="left:475px;top:242px;font:12px 'Liberation Mono';line-height:12px;color:#b81818;white-space:pre;will-change:transform;transform:scaleX(0.9);transform-origin:0 0;letter-spacing:-0.53px;-webkit-text-stroke:0.15px currentColor">C?</div>
<div class="a" style="left:159.5px;top:242px;width:400px;text-align:right;font:12px 'Liberation Mono';line-height:12px;color:#b81818;white-space:pre;will-change:transform;transform:scaleX(0.9);transform-origin:100% 0;letter-spacing:-0.53px;-webkit-text-stroke:0.15px currentColor">0.000</div>
<div class="a" style="left:474px;top:256px;width:86px;height:15px;background:#fff"></div>
<div class="a" style="left:475px;top:259px;font:12px 'Liberation Mono';line-height:12px;color:#b81818;white-space:pre;will-change:transform;transform:scaleX(0.9);transform-origin:0 0;letter-spacing:-0.53px;-webkit-text-stroke:0.15px currentColor">S?</div>
<div class="a" style="left:159.5px;top:259px;width:400px;text-align:right;font:12px 'Liberation Mono';line-height:12px;color:#b81818;white-space:pre;will-change:transform;transform:scaleX(0.9);transform-origin:100% 0;letter-spacing:-0.53px;-webkit-text-stroke:0.15px currentColor">316.348</div>
<div class="a" style="left:329px;top:225px;font:12px 'Liberation Mono';line-height:12px;color:#b81818;white-space:pre;will-change:transform;transform:scaleX(0.9);transform-origin:0 0;letter-spacing:-0.53px;-webkit-text-stroke:0.15px currentColor">ACTL.</div>
<div class="a" style="left:327px;top:273px;width:248px;height:35px;background:#e6e6e6;border:1px solid #a8a8a0"></div>
<div class="a" style="left:328px;top:274px;width:16px;height:15px;background:#fff"></div>
<div class="a" style="left:360px;top:274px;width:60px;height:15px;background:#fff"></div>
<div class="a" style="left:425px;top:274px;width:135px;height:15px;background:#fff"></div>
<div class="a" style="left:329px;top:277px;font:12px 'Liberation Mono';line-height:12px;color:#b81818;white-space:pre;will-change:transform;transform:scaleX(0.9);transform-origin:0 0;letter-spacing:-0.53px;-webkit-text-stroke:0.15px currentColor">T</div>
<div class="a" style="left:346px;top:277px;font:12px 'Liberation Mono';line-height:12px;color:#000;white-space:pre;will-change:transform;transform:scaleX(0.9);transform-origin:0 0;letter-spacing:-0.53px;-webkit-text-stroke:0.15px currentColor">:</div>
<div class="a" style="left:360px;top:277px;font:12px 'Liberation Mono';line-height:12px;color:#b81818;white-space:pre;will-change:transform;transform:scaleX(0.9);transform-origin:0 0;letter-spacing:-0.53px;-webkit-text-stroke:0.15px currentColor">47</div>
<div class="a" style="left:425px;top:277px;font:12px 'Liberation Mono';line-height:12px;color:#b81818;white-space:pre;will-change:transform;transform:scaleX(0.9);transform-origin:0 0;letter-spacing:-0.53px;-webkit-text-stroke:0.15px currentColor">1</div>
<div class="a" style="left:370px;top:291px;width:70px;height:15px;background:#fff"></div>
<div class="a" style="left:490px;top:291px;width:70px;height:15px;background:#fff"></div>
<div class="a" style="left:329px;top:294px;font:12px 'Liberation Mono';line-height:12px;color:#1010b0;white-space:pre;will-change:transform;transform:scaleX(0.9);transform-origin:0 0;letter-spacing:-0.53px;-webkit-text-stroke:0.15px currentColor">L</div>
<div class="a" style="left:39px;top:294px;width:400px;text-align:right;font:12px 'Liberation Mono';line-height:12px;color:#b81818;white-space:pre;will-change:transform;transform:scaleX(0.9);transform-origin:100% 0;letter-spacing:-0.53px;-webkit-text-stroke:0.15px currentColor">+0.0000</div>
<div class="a" style="left:444px;top:294px;font:12px 'Liberation Mono';line-height:12px;color:#1010b0;white-space:pre;will-change:transform;transform:scaleX(0.9);transform-origin:0 0;letter-spacing:-0.53px;-webkit-text-stroke:0.15px currentColor">R</div>
<div class="a" style="left:159.5px;top:294px;width:400px;text-align:right;font:12px 'Liberation Mono';line-height:12px;color:#b81818;white-space:pre;will-change:transform;transform:scaleX(0.9);transform-origin:100% 0;letter-spacing:-0.53px;-webkit-text-stroke:0.15px currentColor">+0.0000</div>
<div class="a" style="left:327px;top:309px;width:248px;height:34px;background:#e6e6e6;border:1px solid #a8a8a0"></div>
<div class="a" style="left:370px;top:310px;width:70px;height:15px;background:#fff"></div>
<div class="a" style="left:490px;top:310px;width:70px;height:15px;background:#fff"></div>
<div class="a" style="left:329px;top:313px;font:12px 'Liberation Mono';line-height:12px;color:#1010b0;white-space:pre;will-change:transform;transform:scaleX(0.9);transform-origin:0 0;letter-spacing:-0.53px;-webkit-text-stroke:0.15px currentColor">DL-TAB</div>
<div class="a" style="left:39px;top:313px;width:400px;text-align:right;font:12px 'Liberation Mono';line-height:12px;color:#b81818;white-space:pre;will-change:transform;transform:scaleX(0.9);transform-origin:100% 0;letter-spacing:-0.53px;-webkit-text-stroke:0.15px currentColor">+0.0000</div>
<div class="a" style="left:444px;top:313px;font:12px 'Liberation Mono';line-height:12px;color:#1010b0;white-space:pre;will-change:transform;transform:scaleX(0.9);transform-origin:0 0;letter-spacing:-0.53px;-webkit-text-stroke:0.15px currentColor">DR-TAB</div>
<div class="a" style="left:159.5px;top:313px;width:400px;text-align:right;font:12px 'Liberation Mono';line-height:12px;color:#b81818;white-space:pre;will-change:transform;transform:scaleX(0.9);transform-origin:100% 0;letter-spacing:-0.53px;-webkit-text-stroke:0.15px currentColor">+0.0000</div>
<div class="a" style="left:370px;top:326px;width:70px;height:15px;background:#fff"></div>
<div class="a" style="left:490px;top:326px;width:70px;height:15px;background:#fff"></div>
<div class="a" style="left:329px;top:329px;font:12px 'Liberation Mono';line-height:12px;color:#1010b0;white-space:pre;will-change:transform;transform:scaleX(0.9);transform-origin:0 0;letter-spacing:-0.53px;-webkit-text-stroke:0.15px currentColor">DL-PGM</div>
<div class="a" style="left:39px;top:329px;width:400px;text-align:right;font:12px 'Liberation Mono';line-height:12px;color:#b81818;white-space:pre;will-change:transform;transform:scaleX(0.9);transform-origin:100% 0;letter-spacing:-0.53px;-webkit-text-stroke:0.15px currentColor">+0.0000</div>
<div class="a" style="left:444px;top:329px;font:12px 'Liberation Mono';line-height:12px;color:#1010b0;white-space:pre;will-change:transform;transform:scaleX(0.9);transform-origin:0 0;letter-spacing:-0.53px;-webkit-text-stroke:0.15px currentColor">DR-PGM</div>
<div class="a" style="left:159.5px;top:329px;width:400px;text-align:right;font:12px 'Liberation Mono';line-height:12px;color:#b81818;white-space:pre;will-change:transform;transform:scaleX(0.9);transform-origin:100% 0;letter-spacing:-0.53px;-webkit-text-stroke:0.15px currentColor">+0.0000</div>
<div class="a" style="left:327px;top:345px;width:58px;height:17px;background:#fff;border:1px solid #a8a8a0"></div>
<div class="a" style="left:386px;top:345px;width:58px;height:17px;background:#fff;border:1px solid #a8a8a0"></div>
<div class="a" style="left:445px;top:345px;width:58px;height:17px;background:#fff;border:1px solid #a8a8a0"></div>
<div class="a" style="left:447px;top:349px;font:12px 'Liberation Mono';line-height:12px;color:#b81818;white-space:pre;will-change:transform;transform:scaleX(0.9);transform-origin:0 0;letter-spacing:-0.53px;-webkit-text-stroke:0.15px currentColor">M9</div>
<div class="a" style="left:504px;top:345px;width:59px;height:17px;background:#fff;border:1px solid #a8a8a0"></div>
<div class="a" style="left:506px;top:349px;font:12px 'Liberation Mono';line-height:12px;color:#b81818;white-space:pre;will-change:transform;transform:scaleX(0.9);transform-origin:0 0;letter-spacing:-0.53px;-webkit-text-stroke:0.15px currentColor">M5</div>
<div class="a" style="left:327px;top:364px;width:236px;height:53px;background:#e6e6e6;border:1px solid #a8a8a0"></div>
<div class="a" style="left:443px;top:365px;width:2px;height:51px;background:#a8a8a0"></div>
<div class="a" style="left:346px;top:366px;width:94px;height:14px;background:#fff"></div>
<div class="a" style="left:462px;top:366px;width:100px;height:14px;background:#fff"></div>
<div class="a" style="left:346px;top:383px;width:94px;height:14px;background:#fff"></div>
<div class="a" style="left:462px;top:383px;width:100px;height:14px;background:#fff"></div>
<div class="a" style="left:346px;top:400px;width:94px;height:14px;background:#fff"></div>
<div class="a" style="left:462px;top:400px;width:100px;height:14px;background:#fff"></div>
<svg class="a" style="left:326px;top:362px" width="20" height="56"><path d="M10.5 20.5H14.5L17.5 23.5V26.5H12.5L10.5 24.5Z" fill="#80bcf0" stroke="#000" stroke-width="1"/><path d="M4 33L10 27" stroke="#e02020" stroke-width="1.4" stroke-dasharray="2 1.2"/><path d="M3 29.5L9 34.5M3.5 34.5L8.5 29.5" stroke="#000" stroke-width="1.2"/></svg>
<svg class="a" style="left:443px;top:362px" width="22" height="56"><path d="M10.5 3.5H14.5L17.5 6.5V8.5H12.5L10.5 6.5Z" fill="#80bcf0" stroke="#000" stroke-width="1"/><path d="M4 15L10 9" stroke="#e02020" stroke-width="1.4" stroke-dasharray="2 1.2"/><path d="M2 12.5L8 17.5M2.5 17.5L7.5 12.5" stroke="#000" stroke-width="1.2"/><path d="M14 12V18M17 12V18M12.5 13.5H18.5M12.5 16.5H18.5" stroke="#0018d0" stroke-width="1.3"/><path d="M8.5 20.5H5.5L2.5 23.5V28.5H8.5Z" fill="#80bcf0" stroke="#000" stroke-width="1"/><path d="M12.5 20.5H15.5L18.5 23.5V28.5H12.5Z" fill="#fff" stroke="#000" stroke-width="1"/><path d="M7 30H14L10.5 34Z" fill="#606060"/><path d="M8 31.5H13" stroke="#bbb" stroke-width="1"/><path d="M2.5 44.5L10 37.5L15 41.5L7.5 48.5Z" fill="#80bcf0" stroke="#000" stroke-width="1"/><path d="M3 48.5H17.5" stroke="#000" stroke-width="1"/><path d="M14.5 43.5Q17 45 17 48" fill="none" stroke="#e02020" stroke-width="1.2"/><circle cx="14.5" cy="43.5" r="1.3" fill="#e02020"/><path d="M5 50L7 53L9 50" fill="none" stroke="#000" stroke-width="1.2"/></svg>
<div class="a" style="left:327px;top:418px;width:248px;height:10px;background:#fff;border:1px solid #a8a8a0;border-bottom:none"></div>
<div class="a" style="left:378px;top:419px;width:28px;height:9px;background:#dcdce0"></div>
<div class="a" style="left:378px;top:421px;font:12px 'Liberation Mono';line-height:12px;color:#1010b0;white-space:pre;will-change:transform;transform:scaleX(0.9);transform-origin:0 0;letter-spacing:-0.53px;-webkit-text-stroke:0.15px currentColor">LBL</div>
<div class="a" style="left:490px;top:419px;width:85px;height:9px;background:#e6e6e6"></div>
<div class="a" style="left:53px;top:428px;width:544px;height:2px;background:#111"></div>
<div class="a" style="left:53px;top:430px;width:544px;height:38px;background:#e6e6e6;border-right:1px solid #111"></div>
<svg class="a" style="left:50px;top:425px" width="230" height="45"><path d="M7.5 6.5V18.0H217.5V6.5M7.5 8.5H217.5M7.5 6.5V8.5M21.5 6.5V8.5M35.5 6.5V8.5M49.5 6.5V8.5M63.5 6.5V8.5M77.5 6.5V8.5M91.5 6.5V8.5M105.5 6.5V8.5M119.5 6.5V8.5M133.5 6.5V8.5M147.5 6.5V8.5M161.5 6.5V8.5M175.5 6.5V8.5M189.5 6.5V8.5M203.5 6.5V8.5M217.5 6.5V8.5" fill="none" stroke="#a0a098" stroke-width="1"/><path d="M7.5 26V37.5H217.5V26M7.5 28H217.5M7.5 26.0V28.0M21.5 26.0V28.0M35.5 26.0V28.0M49.5 26.0V28.0M63.5 26.0V28.0M77.5 26.0V28.0M91.5 26.0V28.0M105.5 26.0V28.0M119.5 26.0V28.0M133.5 26.0V28.0M147.5 26.0V28.0M161.5 26.0V28.0M175.5 26.0V28.0M189.5 26.0V28.0M203.5 26.0V28.0M217.5 26.0V28.0" fill="none" stroke="#a0a098" stroke-width="1"/></svg>
<div class="a" style="left:-71px;top:432px;width:400px;text-align:right;font:bold 14px 'Liberation Sans';line-height:14px;color:#000;white-space:pre;will-change:transform;transform:scaleX(1.0);transform-origin:100% 0;">100%</div>
<div class="a" style="left:-71px;top:451px;width:400px;text-align:right;font:bold 14px 'Liberation Sans';line-height:14px;color:#000;white-space:pre;will-change:transform;transform:scaleX(1.0);transform-origin:100% 0;">0%</div>
<div class="a" style="left:338px;top:432px;font:bold 14px 'Liberation Sans';line-height:14px;color:#000;white-space:pre;will-change:transform;transform:scaleX(1.0);transform-origin:0 0;">Z[Nm]</div>
<div class="a" style="left:338px;top:450px;font:bold 14px 'Liberation Sans';line-height:14px;color:#000;white-space:pre;will-change:transform;transform:scaleX(1.0);transform-origin:0 0;">S-ACT</div>
<div class="a" style="left:428px;top:432px;font:bold 14px 'Liberation Sans';line-height:14px;color:#000;white-space:pre;will-change:transform;transform:scaleX(1.0);transform-origin:0 0;">P1</div>
<div class="a" style="left:488px;top:432px;font:bold 14px 'Liberation Sans';line-height:14px;color:#000;white-space:pre;will-change:transform;transform:scaleX(1.0);transform-origin:0 0;">-</div>
<div class="a" style="left:502px;top:432px;font:bold 14px 'Liberation Sans';line-height:14px;color:#000;white-space:pre;will-change:transform;transform:scaleX(1.0);transform-origin:0 0;">T0</div>
<div class="a" style="left:428px;top:450px;font:bold 14px 'Liberation Sans';line-height:14px;color:#000;white-space:pre;will-change:transform;transform:scaleX(1.0);transform-origin:0 0;">13:51</div>
<svg class="a" style="left:254px;top:502px" width="26" height="16"><rect x="5.5" y="0.5" width="3" height="7" fill="#f0e8a0" stroke="#333" stroke-width=".8"/><circle cx="7" cy="9" r="1.8" fill="#e02020"/><path d="M0.5 14.5H23.5V6.5H14.5L11.5 10.5H0.5Z" fill="#fff" stroke="#000" stroke-width="1"/><path d="M1 12.5L3 10.5M4 12.5L6 10.5M7 12.5L9 10.5M15 14L20 7M18 14L23 7M12 14L17 7" stroke="#000" stroke-width=".9"/></svg>
<svg class="a" style="left:319px;top:501px" width="20" height="20"><circle cx="9.5" cy="9.5" r="5.6" fill="none" stroke="#000" stroke-width="1"/><circle cx="9.5" cy="9.5" r="3.2" fill="none" stroke="#000" stroke-width="0.9"/><path d="M9.5 9.5H13.5A4 4 0 0 1 9.5 13.5Z" fill="#000"/><path d="M9.5 1V18M1 9.5H18" stroke="#000" stroke-width="1.4"/></svg>
<svg class="a" style="left:426px;top:493px" width="50" height="26"><path d="M2.5 11V23.5H16M2.5 23.5L9 17" fill="none" stroke="#000" stroke-width="1.1"/><path d="M0.5 12.5L2.5 10L4.5 12.5Z M14.5 21.5L17 23.5L14.5 25.5Z" fill="#000"/><circle cx="9" cy="16.5" r="1.2" fill="#000"/><path d="M12.5 12.5L31.5 1.5L47 9.5L27 22.5Z" fill="#fbfbfb" stroke="#333" stroke-width=".9"/><path d="M12.5 12.5V14.5L27 24.5L47 11.5V9.5L27 22.5Z" fill="#c8c8cc" stroke="#333" stroke-width=".9"/></svg>
<svg class="a" style="left:611px;top:502px" width="48" height="17"><path d="M2.5 1.5H10.5V3.5L7.5 9H5.5L2.5 3.5Z" fill="#e8e8e8" stroke="#444" stroke-width=".8"/><path d="M3 2H10" stroke="#333" stroke-width="1.2" stroke-dasharray="1 1"/><path d="M6.5 9V15M4.5 13H8.5" stroke="#d02020" stroke-width="1"/><rect x="20.5" y="1.5" width="5" height="14" rx="1" fill="#d8c840" stroke="#555" stroke-width=".8"/><path d="M21 5L25 8M21 9L25 12M21 12L25 15" stroke="#806000" stroke-width=".8"/><rect x="20.5" y="1.5" width="5" height="2" fill="#e8e8e8" stroke="#555" stroke-width=".6"/><rect x="36.5" y="1.5" width="7" height="14" fill="#888" stroke="#444" stroke-width=".8"/><rect x="38" y="2" width="4.5" height="6" fill="#f0f0f0"/><path d="M40 10L43 14" stroke="#e0d040" stroke-width="2"/></svg>
</body></html>
